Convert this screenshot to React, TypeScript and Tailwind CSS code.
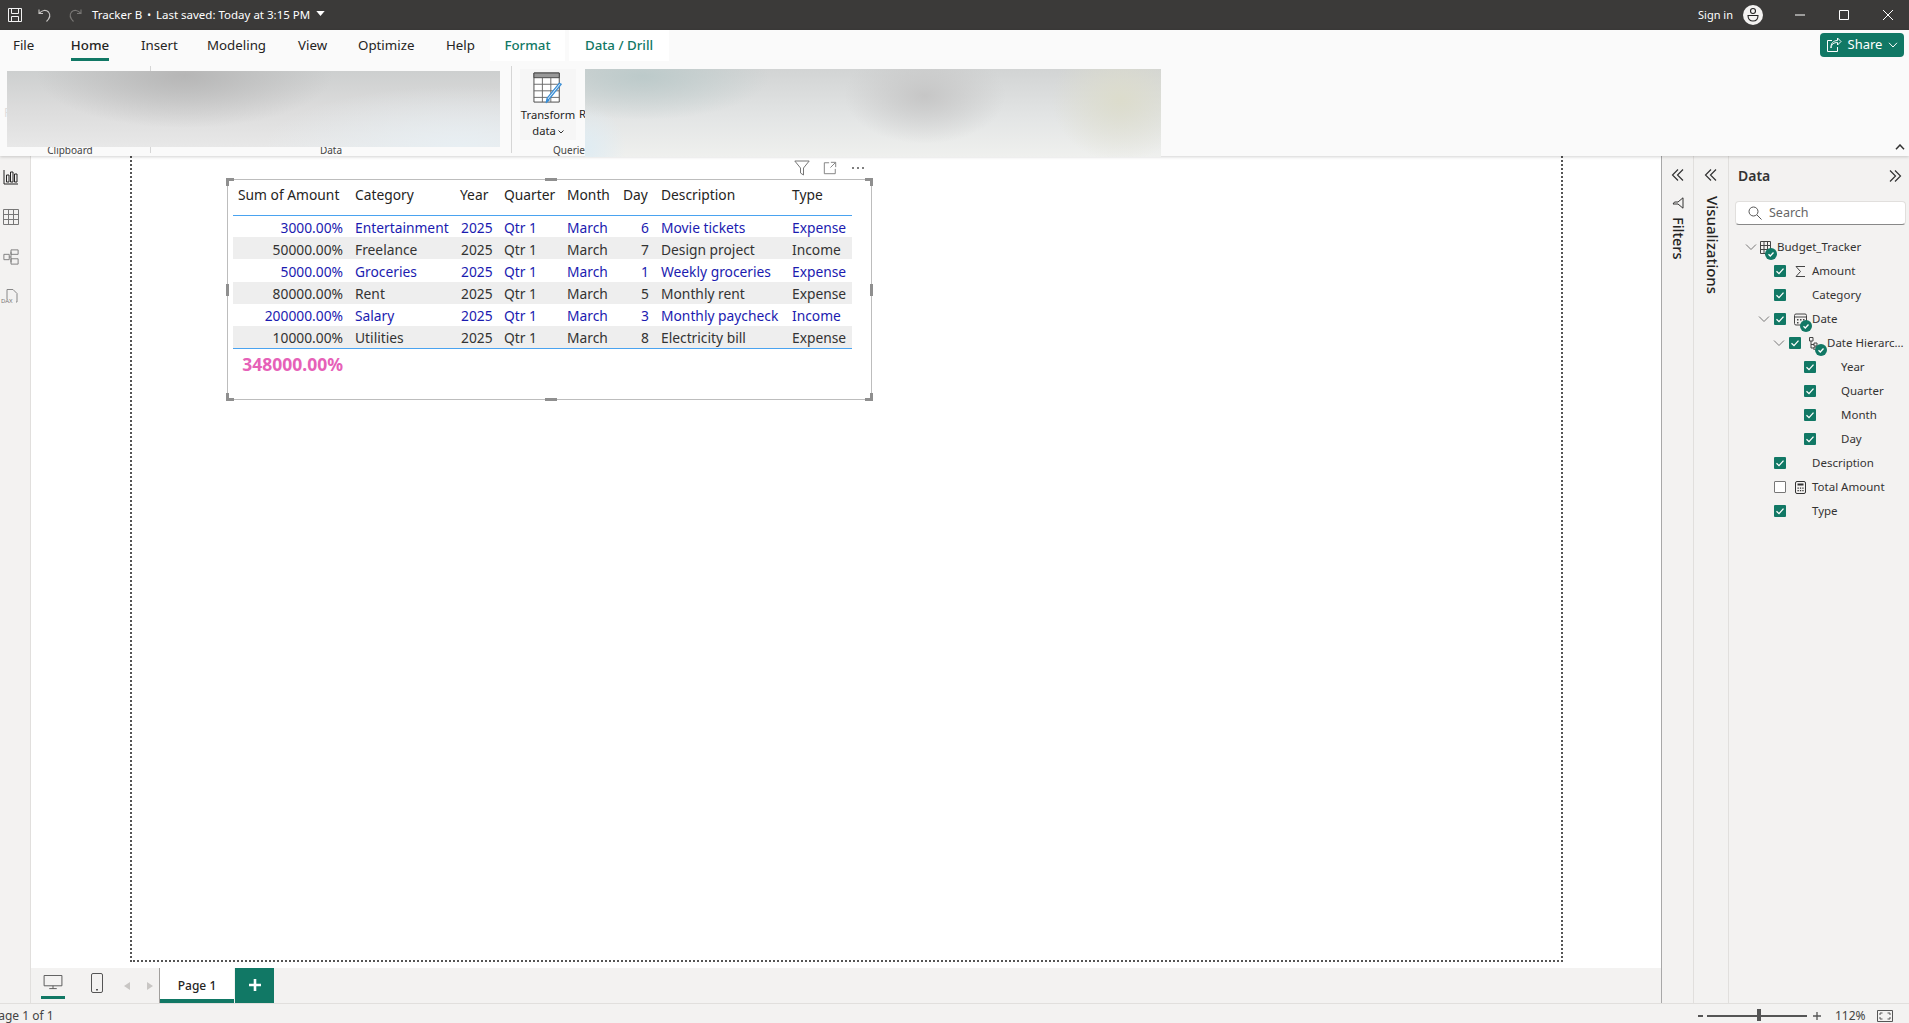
import React from "react";

const font = "font-['Noto_Sans','Open_Sans',sans-serif]";

const cols = ["w-[115px]", "w-[106px]", "w-[44px]", "w-[63px]", "w-[55px]", "w-[38px]", "w-[132px]", "w-[66px]"];
const rows = [
  ["3000.00%", "Entertainment", "2025", "Qtr 1", "March", "6", "Movie tickets", "Expense"],
  ["50000.00%", "Freelance", "2025", "Qtr 1", "March", "7", "Design project", "Income"],
  ["5000.00%", "Groceries", "2025", "Qtr 1", "March", "1", "Weekly groceries", "Expense"],
  ["80000.00%", "Rent", "2025", "Qtr 1", "March", "5", "Monthly rent", "Expense"],
  ["200000.00%", "Salary", "2025", "Qtr 1", "March", "3", "Monthly paycheck", "Income"],
  ["10000.00%", "Utilities", "2025", "Qtr 1", "March", "8", "Electricity bill", "Expense"],
];
const heads = ["Sum of Amount", "Category", "Year", "Quarter", "Month", "Day", "Description", "Type"];
const headPad = ["pl-[5px]", "pl-[7px]", "pl-[6px]", "pl-[6px]", "pl-[6px]", "pl-[7px]", "pl-[7px]", "pl-[6px]"];
const cellPad = ["pr-[5px] text-right", "pl-[7px]", "pl-[7px]", "pl-[6px]", "pl-[6px]", "pr-[5px] text-right", "pl-[7px]", "pl-[6px]"];

function Check({ on = true }: { on?: boolean }) {
  return on ? (
    <span className="flex h-[12px] w-[12px] items-center justify-center rounded-[1px] bg-[#117865]">
      <svg viewBox="0 0 12 12" className="h-[12px] w-[12px]"><path d="M2.5 6.2 5 8.6l4.5-5" fill="none" stroke="#fff" strokeWidth="1.3" /></svg>
    </span>
  ) : (
    <span className="h-[12px] w-[12px] rounded-[1px] border border-[#777] bg-white" />
  );
}

function Chev() {
  return <svg viewBox="0 0 12 12" className="h-[12px] w-[12px]"><path d="M1 3.5l5 5 5-5" fill="none" stroke="#777" strokeWidth="1" /></svg>;
}

function Badge() {
  return (
    <span className="absolute left-[6px] top-[7px] flex h-[12px] w-[12px] items-center justify-center rounded-full bg-[#117865]">
      <svg viewBox="0 0 12 12" className="h-[12px] w-[12px]"><path d="M3.5 6.2 5.3 8l3.2-3.5" fill="none" stroke="#fff" strokeWidth="1.3" /></svg>
    </span>
  );
}

function TableIcon() {
  return (
    <span className="relative block h-[13px] w-[13px]">
      <svg viewBox="0 0 13 13" className="h-[13px] w-[13px]"><path d="M1.5.5h10v12h-10zM1.5 4.5h10M1.5 8.5h10M5 .5v12M8.5.5v12" fill="none" stroke="#444" strokeWidth="1" /></svg>
      <Badge />
    </span>
  );
}
function Sigma() {
  return <svg viewBox="0 0 13 13" className="h-[13px] w-[13px]"><path d="M11 1.5H2l4.5 5-4.5 5h9" fill="none" stroke="#444" strokeWidth="1" /></svg>;
}
function CalIcon() {
  return (
    <span className="relative block h-[13px] w-[13px]">
      <svg viewBox="0 0 13 13" className="h-[13px] w-[13px]"><path d="M2 1h9a1.500 1.500 0 0 1 1.500 1.500v8A1.500 1.500 0 0 1 11 12H2a1.500 1.500 0 0 1-1.500-1.500v-8A1.500 1.500 0 0 1 2 1zM.5 4h12" fill="none" stroke="#444" /><path d="M3 6h1.500v1.500H3zM6 6h1.500v1.500H6zM9 6h1.500v1.500H9zM3 9h1.500v1.500H3z" fill="#444" /></svg>
      <Badge />
    </span>
  );
}
function HierIcon() {
  return (
    <span className="relative block h-[13px] w-[13px]">
      <svg viewBox="0 0 13 13" className="h-[13px] w-[13px]"><path d="M.5.5h3.500v3.500H.500zM2 4v7h3M2 7.500h3M5 6h3v3H5zM5 10h3v3H5z" fill="none" stroke="#444" /></svg>
      <Badge />
    </span>
  );
}
function CalcIcon() {
  return <svg viewBox="0 0 13 13" className="h-[13px] w-[13px]"><rect x="1.500" y=".5" width="10" height="12" rx="1.500" fill="none" stroke="#333" /><path d="M3.500 2.500h6v2h-6z" fill="#333" /><path d="M3.500 6.500h1.300v1.300H3.500zM5.900 6.500h1.300v1.300H5.900zM8.300 6.500h1.300v1.300H8.300zM3.500 9h1.300v1.300H3.500zM5.900 9h1.300v1.300H5.900zM8.300 9h1.300v1.300H8.300z" fill="#333" /></svg>;
}

function Slot({ className, children }: { className: string; children?: React.ReactNode }) {
  return <span className={`flex shrink-0 items-center justify-center ${className}`}>{children}</span>;
}

function DoubleChev({ right = false }: { right?: boolean }) {
  return (
    <svg viewBox="0 0 14 14" className="h-[14px] w-[14px]">
      <path d={right ? "M2 1.500 7.500 7 2 12.500M7 1.500 12.500 7 7 12.500" : "M12 1.500 6.500 7 12 12.500M7 1.500 1.500 7 7 12.500"} fill="none" stroke="#333" strokeWidth="1.2" />
    </svg>
  );
}

function Tab({ label, active = false, ctx = false, className = "" }: { label: string; active?: boolean; ctx?: boolean; className?: string }) {
  if (ctx) {
    return <div className={`flex h-[31px] items-center justify-center bg-white text-[13.300px] font-medium text-[#117865] ${className}`}>{label}</div>;
  }
  return (
    <div className={`relative flex h-[31px] items-center text-[13.300px] text-[#252423] ${active ? "font-medium" : ""} ${className}`}>
      {label}
      {active && <span className="absolute bottom-0 left-0 right-0 h-[3px] bg-[#117865]" />}
    </div>
  );
}

function Handle({ className }: { className: string }) {
  return <span className={`absolute bg-[#8f8f8f] ${className}`} />;
}

export default function App() {
  return (
    <div className={`flex h-[1023px] w-[1909px] flex-col overflow-hidden bg-[#f3f2f1] ${font} text-[#252423]`}>
      {/* Title bar */}
      <div className="flex h-[30px] shrink-0 items-center bg-[#3b3a39] text-white">
        <div className="ml-[7px] flex w-[16px] justify-center">
          <svg viewBox="0 0 16 16" className="h-[16px] w-[16px]"><path d="M1.500 1.500h13v13h-13zM4.500 1.500v5h7v-5M4.500 14.500v-5h7v5" fill="none" stroke="#f3f3f3" strokeWidth="1" /></svg>
        </div>
        <svg viewBox="0 0 16 16" className="ml-[14px] h-[16px] w-[16px]"><path d="M2 2.500v4h4M2.300 6.300C5 3 9 2.500 11.500 5c2.500 3 1 6.500-2 9.500" fill="none" stroke="#c8c6c4" strokeWidth="1.100" /></svg>
        <svg viewBox="0 0 16 16" className="ml-[14px] h-[16px] w-[16px]"><path d="M14 2.500v4h-4M13.700 6.300C11 3 7 2.500 4.500 5c-2.500 3-1 6.500 2 9.500" fill="none" stroke="#797775" strokeWidth="1.100" /></svg>
        <span className="ml-[9px] text-[11.500px]">Tracker B</span>
        <span className="ml-[5px] text-[10px]">•</span>
        <span className="ml-[5px] text-[11.500px]">Last saved: Today at 3:15 PM</span>
        <svg viewBox="0 0 10 6" className="ml-[6px] mb-[3px] h-[5px] w-[9px]"><path d="M0 0h10L5 6z" fill="#fff" /></svg>
        <div className="flex-1" />
        <span className="text-[11px]">Sign in</span>
        <svg viewBox="0 0 20 20" className="ml-[10px] h-[20px] w-[20px]"><circle cx="10" cy="10" r="10" fill="#f3f2f1" /><circle cx="10" cy="6" r="2.500" fill="none" stroke="#222" strokeWidth="1.100" /><path d="M5 10.500h10c0 3.500-2 5.500-5 5.500s-5-2-5-5.500z" fill="none" stroke="#222" strokeWidth="1.100" /></svg>
        <svg viewBox="0 0 12 12" className="ml-[31px] h-[12px] w-[12px]"><path d="M1 6h10" stroke="#fff" strokeWidth="1" /></svg>
        <svg viewBox="0 0 12 12" className="ml-[32px] h-[12px] w-[12px]"><path d="M1.500 1.500h9v9h-9z" fill="none" stroke="#fff" strokeWidth="1" /></svg>
        <svg viewBox="0 0 12 12" className="ml-[32px] mr-[15px] h-[12px] w-[12px]"><path d="M1 1l10 10M11 1 1 11" stroke="#fff" strokeWidth="1" /></svg>
      </div>

      {/* Ribbon */}
      <div className="relative z-10 h-[126px] shrink-0 bg-[#fafafa] shadow-[0_1px_3px_rgba(0,0,0,0.18)]">
        <div className="flex h-[31px] items-center pl-[13px]">
          <Tab label="File" className="w-[24px]" />
          <Tab label="Home" active className="ml-[34px] w-[38px] justify-center" />
          <Tab label="Insert" className="ml-[32px] w-[37px]" />
          <Tab label="Modeling" className="ml-[29px] w-[58px]" />
          <Tab label="View" className="ml-[33px] w-[31px]" />
          <Tab label="Optimize" className="ml-[29px] w-[58px]" />
          <Tab label="Help" className="ml-[30px] w-[30px]" />
          <Tab label="Format" ctx className="ml-[14px] w-[75px]" />
          <Tab label="Data / Drill" ctx className="ml-[4px] w-[100px]" />
          <div className="flex-1" />
          <div className="mr-[5px] mt-[3px] flex h-[24px] w-[84px] items-center justify-center gap-[6px] self-start rounded-[4px] bg-[#117865] text-[13px] text-white">
            <svg viewBox="0 0 16 16" className="h-[16px] w-[16px]"><path d="M6 3.500H1.500v11h10V10M5 11c.500-4 3-5.500 6.500-5.500V8L15 4.500 11.500 1v2.500C7 3.500 4.500 7 5 11z" fill="none" stroke="#fff" strokeWidth="1" /></svg>
            Share
            <svg viewBox="0 0 10 6" className="h-[6px] w-[10px]"><path d="M1 .8 5 5l4-4.200" fill="none" stroke="#fff" /></svg>
          </div>
        </div>
        <div className="flex h-[95px]">
          <div className="mt-[5px] flex h-[87px] w-[151px] shrink-0 flex-col justify-between border-r border-[#d6d6d6]">
            <span className="ml-[4px] mt-[38px] text-[12px] text-[#dedede]">Past</span>
            <span className="translate-y-[2px] pr-[10px] text-center text-[10px] leading-[10px] text-[#444]">Clipboard</span>
          </div>
          <div className="mt-[5px] flex h-[87px] w-[361px] shrink-0 items-end justify-center border-r border-[#d6d6d6]">
            <span className="translate-y-[2px] text-[10px] leading-[10px] text-[#444]">Data</span>
          </div>
          <div className="flex w-[100px] shrink-0 flex-col pl-[8px] pt-[8px]">
            <div className="flex h-[72px] w-[56px] flex-col items-center bg-[#f6f6f6]">
              <svg viewBox="0 0 32 34" className="mt-[3px] h-[32px] w-[30px]">
                <path d="M1 1h27v31H1z" fill="#fff" stroke="#444" /><path d="M1 1h27v5H1z" fill="#999" stroke="#444" />
                <path d="M1 13h27M1 20h27M1 27h27M10 6v26M19 6v26" stroke="#666" />
                <path d="M30 13 17 29l-3 4 1-5 13-16z" fill="#fff" stroke="#3b8fd6" strokeWidth="1.300" /><path d="M14 33l1-5 3 2z" fill="#3b8fd6" />
              </svg>
              <span className="mt-[3px] text-[11.200px] leading-[16px] whitespace-nowrap">Transform</span>
              <span className="flex items-center gap-[2px] text-[11.200px] leading-[16px]">data<svg viewBox="0 0 6 4" className="mt-[2px] h-[4px] w-[6px]"><path d="M.5.5 3 3 5.500.5" fill="none" stroke="#333" /></svg></span>
            </div>
            <span className="ml-[33px] mt-[4px] text-[10px] leading-[12px] text-[#444]">Queries</span>
          </div>
          <div className="flex-1" />
        </div>
        <span className="absolute left-[579px] top-[76px] text-[11.200px] leading-[16px]">R</span>
        <div className="absolute left-[7px] top-[41px] h-[76px] w-[493px] bg-[radial-gradient(ellipse_30%_70%_at_36%_5%,#b6b6b6,transparent),radial-gradient(ellipse_40%_80%_at_92%_100%,#e8eff3,transparent),linear-gradient(180deg,#cdcfcf,#dcdcdc_50%,#e8e8e8)]" />
        <div className="absolute left-[585px] top-[39px] h-[88px] w-[576px] bg-[radial-gradient(ellipse_14%_55%_at_59%_30%,#c6c6c6,transparent),radial-gradient(ellipse_12%_70%_at_93%_35%,#dcdccc,transparent),radial-gradient(ellipse_22%_50%_at_10%_8%,#bccaca,transparent),radial-gradient(ellipse_7%_50%_at_0%_90%,#dfecf3,transparent),linear-gradient(180deg,#d2d4d4,#e3e5e5_55%,#eff0ee)]" />
        <svg viewBox="0 0 10 6" className="absolute left-[1895px] top-[114px] h-[6px] w-[10px]"><path d="M1 5.200 5 1l4 4.200" fill="none" stroke="#333" strokeWidth="1.500" /></svg>
      </div>

      {/* Middle */}
      <div className="flex min-h-0 flex-1">
        {/* Left rail */}
        <div className="flex w-[31px] shrink-0 flex-col items-start gap-[24px] border-r border-[#e1dfdd] pl-[3px] pt-[13px]">
          <svg viewBox="0 0 16 16" className="h-[16px] w-[16px]"><path d="M1 1v14h14M3.500 6h2.500v7H3.500zM7.500 3h2.500v10H7.500zM11.500 5H14v8h-2.500z" fill="none" stroke="#222" strokeWidth="1" /></svg>
          <svg viewBox="0 0 16 16" className="h-[16px] w-[16px]"><path d="M.5 .5h15v15H.500zM.5 5.500h15M.5 10.500h15M5.500.5v15M10.500.5v15" fill="none" stroke="#777" strokeWidth="1" /></svg>
          <svg viewBox="0 0 18 18" className="h-[16px] w-[16px]"><path d="M1 6h6v6H1zM9 1h8v5H9zM9 11h8v6H9zM7 9h2M9 3v12" fill="none" stroke="#777" strokeWidth="1" /></svg>
          <div className="relative h-[16px] w-[16px]">
            <svg viewBox="0 0 16 16" className="h-[16px] w-[16px]"><path d="M4 10V.5h6l4 4V13h-1" fill="none" stroke="#888" strokeWidth="1" /></svg>
            <span className="absolute -left-[2px] top-[8px] text-[6px] leading-[8px] text-[#777]">DAX</span>
          </div>
        </div>

        {/* Canvas + page tabs */}
        <div className="flex min-w-0 flex-1 flex-col">
          <div className="min-h-0 flex-1 bg-white">
            <div className="ml-[99px] h-[806px] w-[1433px] border-x-2 border-b-2 border-dotted border-[#555] pl-[95px] pt-[23px]">
              <div className="relative h-[221px] w-[645px] border border-[#bdbdbd] pl-[5px] pt-[3px]">
                <Handle className="-left-[2px] -top-[2px] h-[3px] w-[8px]" />
                <Handle className="-left-[2px] -top-[2px] h-[8px] w-[3px]" />
                <Handle className="-right-[2px] -top-[2px] h-[3px] w-[8px]" />
                <Handle className="-right-[2px] -top-[2px] h-[8px] w-[3px]" />
                <Handle className="-left-[2px] -bottom-[2px] h-[3px] w-[8px]" />
                <Handle className="-left-[2px] -bottom-[2px] h-[8px] w-[3px]" />
                <Handle className="-right-[2px] -bottom-[2px] h-[3px] w-[8px]" />
                <Handle className="-right-[2px] -bottom-[2px] h-[8px] w-[3px]" />
                <Handle className="left-[317px] -top-[2px] h-[3px] w-[12px]" />
                <Handle className="left-[317px] -bottom-[2px] h-[3px] w-[12px]" />
                <Handle className="-left-[2px] top-[104px] h-[12px] w-[3px]" />
                <Handle className="-right-[2px] top-[104px] h-[12px] w-[3px]" />
                <div className="absolute -top-[20px] right-[7px] flex items-center">
                  <svg viewBox="0 0 16 16" className="h-[16px] w-[16px]"><path d="M.8 1h14.400L9.500 8v7l-3-2V8z" fill="none" stroke="#777" /></svg>
                  <svg viewBox="0 0 16 16" className="ml-[13px] h-[14px] w-[14px]"><path d="M7 2H1.500v12.500H14V9M9 1.500h5.500V7M14 2 8.500 7.500" fill="none" stroke="#777" /></svg>
                  <span className="ml-[15px] flex gap-[3px]"><i className="h-[2px] w-[2px] rounded-full bg-[#555]" /><i className="h-[2px] w-[2px] rounded-full bg-[#555]" /><i className="h-[2px] w-[2px] rounded-full bg-[#555]" /></span>
                </div>
                <table className="w-[619px] table-fixed border-collapse text-[13.800px]">
                  <colgroup>{cols.map((c) => <col key={c} className={c} />)}</colgroup>
                  <thead>
                    <tr className="h-[32px] border-b border-[#4aa3f0]">
                      {heads.map((h, i) => (
                        <th key={h} className={`whitespace-nowrap p-0 pb-[6px] text-left font-normal text-[#252423] ${headPad[i]}`}>{h}</th>
                      ))}
                    </tr>
                  </thead>
                  <tbody>
                    {rows.map((r, ri) => (
                      <tr key={r[1]} className={`h-[22.200px] ${ri % 2 ? "bg-[#eeeeee] text-[#333]" : "bg-white text-[#1b1bb0]"} ${ri === 5 ? "border-b border-[#4aa3f0]" : ""}`}>
                        {r.map((c, i) => (
                          <td key={i} className={`whitespace-nowrap p-0 pt-[3px] leading-[18px] ${cellPad[i]}`}>{c}</td>
                        ))}
                      </tr>
                    ))}
                    <tr className="h-[28px]">
                      <td className="p-0 pr-[5px] pt-[3px] text-right text-[17.500px] font-bold leading-[22px] text-[#e661b8]">348000.00%</td>
                    </tr>
                  </tbody>
                </table>
              </div>
            </div>
          </div>

          <div className="flex h-[35px] shrink-0 bg-[#f3f2f1]">
            <div className="ml-[10px] flex h-full w-[24px] flex-col items-center pt-[7px]">
              <svg viewBox="0 0 20 16" className="h-[15px] w-[20px]"><path d="M.5.5h19v11H.500zM10 11.500v3M6 14.500h8" fill="none" stroke="#555" strokeWidth="1" /></svg>
              <span className="mt-[6px] h-[3px] w-[24px] bg-[#117865]" />
            </div>
            <div className="ml-[26px] pt-[5px]">
              <svg viewBox="0 0 12 20" className="h-[20px] w-[12px]"><rect x=".5" y=".5" width="11" height="19" rx="1.500" fill="none" stroke="#555" /><rect x="5" y="16" width="2" height="1.500" fill="#555" /></svg>
            </div>
            <div className="ml-[21px] flex items-center gap-[17px]">
              <svg viewBox="0 0 6 8" className="h-[8px] w-[6px]"><path d="M6 0v8L0 4z" fill="#c8c6c4" /></svg>
              <svg viewBox="0 0 6 8" className="h-[8px] w-[6px]"><path d="M0 0v8l6-4z" fill="#c8c6c4" /></svg>
            </div>
            <div className="relative ml-[6px] flex w-[75px] items-center justify-center border-l border-[#a19f9d] bg-white pt-[1px] text-[12px] font-medium">
              Page 1
              <span className="absolute bottom-0 left-0 right-0 h-[4px] bg-[#117865]" />
            </div>
            <div className="ml-[1px] flex w-[39px] items-center justify-center bg-[#117865] pb-[2px]">
              <svg viewBox="0 0 12 12" className="h-[12px] w-[12px]"><path d="M6 0v12M0 6h12" stroke="#fff" strokeWidth="2.600" /></svg>
            </div>
          </div>
        </div>

        {/* Filters pane */}
        <div className="flex w-[33px] shrink-0 flex-col items-center border-l border-r border-l-[#a8a8a8] border-r-[#e1dfdd]">
          <div className="mt-[12px]"><DoubleChev /></div>
          <svg viewBox="0 0 12 12" className="mt-[15px] h-[12px] w-[12px] rotate-90"><path d="M.8 1h10.400L7 6v5L5 9.500V6z" fill="none" stroke="#333" /></svg>
          <span className="ml-[2px] mt-[8px] text-[14.500px] font-medium leading-[18px] [writing-mode:vertical-rl]">Filters</span>
        </div>

        {/* Visualizations pane */}
        <div className="flex w-[35px] shrink-0 flex-col items-center border-r border-[#e1dfdd]">
          <div className="mt-[12px]"><DoubleChev /></div>
          <span className="ml-[4px] mt-[14px] text-[15px] font-medium leading-[18px] [writing-mode:vertical-rl]">Visualizations</span>
        </div>

        {/* Data pane */}
        <div className="flex w-[180px] shrink-0 flex-col">
          <div className="flex h-[39px] items-center justify-between pl-[9px] pr-[7px]">
            <span className="text-[14px] font-semibold text-[#333]">Data</span>
            <DoubleChev right />
          </div>
          <div className="ml-[6px] mt-[6px] flex h-[24px] w-[171px] items-center rounded-[4px] border border-[#e1dfdd] border-b-[#888] bg-white pl-[12px] text-[12.500px] text-[#666]">
            <svg viewBox="0 0 14 14" className="mr-[7px] h-[14px] w-[14px]"><circle cx="5.500" cy="5.500" r="4.500" fill="none" stroke="#555" /><path d="M9 9l4.500 4.500" stroke="#555" /></svg>
            Search
          </div>
          <div className="mt-[10px] flex flex-col text-[11.500px] text-[#333]">
            <div className="flex h-[24px] items-center pl-[14px]">
              <Slot className="w-[16px]"><Chev /></Slot>
              <TableIcon />
              <span className="ml-[5px] whitespace-nowrap">Budget_Tracker</span>
            </div>
            <div className="flex h-[24px] items-center pl-[45px]">
              <Check />
              <Slot className="ml-[8px] w-[13px]"><Sigma /></Slot>
              <span className="ml-[5px]">Amount</span>
            </div>
            <div className="flex h-[24px] items-center pl-[45px]">
              <Check />
              <span className="ml-[26px]">Category</span>
            </div>
            <div className="flex h-[24px] items-center pl-[29px]">
              <Slot className="mr-[4px] w-[12px]"><Chev /></Slot>
              <Check />
              <Slot className="ml-[8px] w-[13px]"><CalIcon /></Slot>
              <span className="ml-[5px]">Date</span>
            </div>
            <div className="flex h-[24px] items-center pl-[44px]">
              <Slot className="mr-[4px] w-[12px]"><Chev /></Slot>
              <Check />
              <Slot className="ml-[8px] w-[13px]"><HierIcon /></Slot>
              <span className="ml-[5px] whitespace-nowrap">Date Hierarc...</span>
            </div>
            {["Year", "Quarter", "Month", "Day"].map((t) => (
              <div key={t} className="flex h-[24px] items-center pl-[75px]">
                <Check />
                <span className="ml-[25px]">{t}</span>
              </div>
            ))}
            <div className="flex h-[24px] items-center pl-[45px]">
              <Check />
              <span className="ml-[26px]">Description</span>
            </div>
            <div className="flex h-[24px] items-center pl-[45px]">
              <Check on={false} />
              <Slot className="ml-[8px] w-[13px]"><CalcIcon /></Slot>
              <span className="ml-[5px]">Total Amount</span>
            </div>
            <div className="flex h-[24px] items-center pl-[45px]">
              <Check />
              <span className="ml-[26px]">Type</span>
            </div>
          </div>
        </div>
      </div>

      {/* Status bar */}
      <div className="flex h-[20px] shrink-0 items-center border-t border-[#e1dfdd] pt-[5px] text-[12px] text-[#444]">
        <span className="-ml-[9px]">Page 1 of 1</span>
        <div className="flex-1" />
        <span className="h-[2px] w-[5px] bg-[#555]" />
        <div className="relative ml-[4px] h-[1.500px] w-[100px] bg-[#555]">
          <span className="absolute left-[50px] -top-[6px] h-[12px] w-[4px] bg-[#555]" />
        </div>
        <svg viewBox="0 0 8 8" className="ml-[6px] h-[8px] w-[8px]"><path d="M4 0v8M0 4h8" stroke="#555" strokeWidth="1.300" /></svg>
        <span className="ml-[14px] w-[30px] text-[12px]">112%</span>
        <svg viewBox="0 0 16 12" className="ml-[12px] mr-[16px] h-[12px] w-[16px]"><path d="M.5.5h15v11H.500z" fill="none" stroke="#555" /><path d="M3 5V3h2.500M10.500 3H13v2M13 7v2h-2.500M5.500 9H3V7" fill="none" stroke="#555" /></svg>
      </div>
    </div>
  );
}
